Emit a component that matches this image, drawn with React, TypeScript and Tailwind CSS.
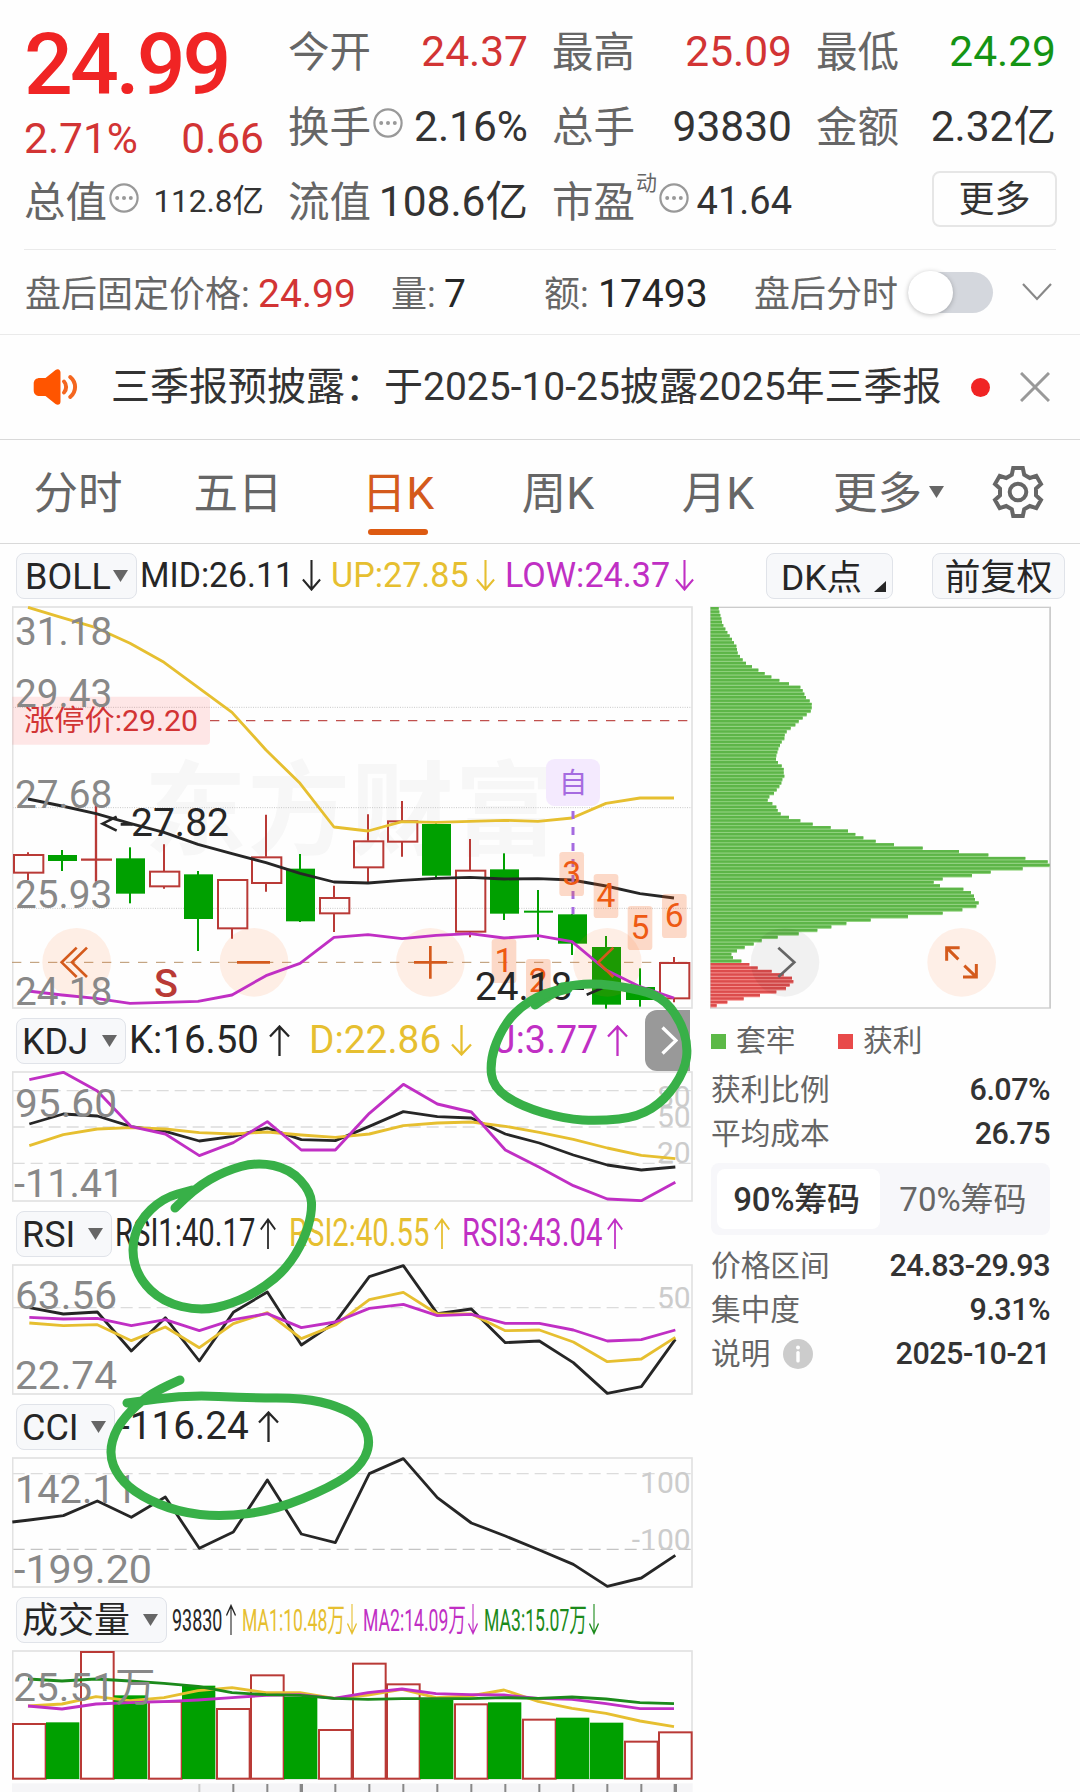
import type { FC, ReactNode } from 'react'

// Charts are drawn in thirds of a pixel, one candle every 102 units
const STEP = 102
const FONT = "font-['Roboto','Noto_Sans_CJK_SC',sans-serif]"

const YELLOW = '#e6bf30'
const PURPLE = '#c02fc4'
const BLACK = '#262626'
const GREEN = '#1b8a1b'
const RED = '#b93a36'
const ORANGE = '#d45a1c'

type Candle = { up: boolean; high: number; low: number; top: number; bottom: number }

const c = (up: boolean, high: number, low: number, top: number, bottom: number): Candle => ({
  up,
  high,
  low,
  top,
  bottom,
})

const candles: Candle[] = [
  c(true, 787, 870, 793, 848),
  c(false, 780, 843, 795, 813),
  c(true, 640, 875, 809, 809),
  c(false, 772, 940, 805, 911),
  c(true, 763, 896, 843, 889),
  c(false, 843, 1083, 853, 987),
  c(true, 867, 1046, 868, 1015),
  c(true, 674, 905, 800, 879),
  c(false, 792, 996, 836, 994),
  c(true, 887, 1026, 922, 970),
  c(true, 673, 876, 752, 832),
  c(true, 633, 800, 692, 755),
  c(false, 700, 862, 702, 857),
  c(true, 747, 1042, 840, 1025),
  c(false, 790, 990, 838, 971),
  c(false, 900, 1050, 962, 968),
  c(false, 972, 1095, 973, 1061),
  c(false, 1038, 1256, 1071, 1244),
  c(false, 1135, 1250, 1191, 1230),
  c(true, 1101, 1237, 1117, 1225),
]

const boll = {
  up: [52, 83, 113, 160, 217, 292, 367, 480, 580, 711, 723, 695, 697, 694, 691, 694, 684, 640, 624, 624],
  mid: [627, 648, 671, 700, 727, 763, 791, 818, 850, 876, 879, 871, 865, 862, 867, 866, 870, 888, 911, 924],
  low: [1203, 1215, 1225, 1240, 1237, 1234, 1215, 1157, 1120, 1042, 1034, 1046, 1036, 1031, 1044, 1037, 1055, 1140, 1190, 1224],
}

const kdj = {
  k: [342, 312, 318, 350, 364, 393, 379, 354, 389, 392, 349, 305, 320, 324, 372, 399, 435, 465, 480, 471],
  d: [407, 374, 357, 353, 357, 368, 372, 366, 375, 382, 372, 347, 339, 336, 349, 367, 388, 414, 436, 446],
  j: [209, 187, 243, 350, 372, 437, 398, 335, 420, 420, 310, 223, 282, 306, 420, 472, 527, 567, 572, 517],
}

const rsi = {
  r1: [893, 912, 906, 1023, 923, 1053, 907, 846, 1005, 937, 800, 767, 911, 897, 998, 993, 1058, 1150, 1130, 988],
  r2: [939, 947, 944, 992, 951, 1013, 941, 908, 986, 945, 869, 847, 912, 912, 962, 960, 996, 1055, 1047, 982],
  r3: [922, 927, 925, 947, 929, 962, 929, 911, 953, 936, 895, 883, 917, 913, 940, 940, 960, 993, 989, 960],
}

const cci = [360, 347, 303, 352, 291, 445, 396, 240, 402, 428, 221, 176, 293, 369, 408, 450, 493, 559, 534, 466]

const volume = {
  tops: [972, 967, 756, 886, 905, 857, 927, 826, 890, 990, 791, 853, 895, 913, 907, 959, 953, 968, 1025, 997],
  down: [1, 3, 5, 8, 12, 14, 16, 17],
  ma1: [918, 912, 890, 902, 893, 872, 863, 878, 878, 895, 885, 868, 893, 888, 870, 904, 925, 940, 963, 980],
  ma2: [918, 927, 912, 908, 905, 900, 893, 886, 884, 895, 878, 867, 881, 884, 885, 895, 898, 911, 926, 926],
  ma3: [837, 843, 837, 843, 850, 859, 878, 884, 886, 895, 898, 896, 896, 896, 893, 895, 891, 897, 908, 911],
}

const chips = [
  24, 26, 29, 32, 34, 38, 44, 50, 57, 64, 70, 77, 79, 81, 88, 96, 106, 124, 143, 162, 182, 206, 235, 269, 276, 281,
  286, 297, 303, 303, 300, 288, 276, 264, 254, 240, 228, 222, 221, 213, 208, 203, 200, 197, 196, 202, 213, 219, 219,
  221, 215, 212, 206, 198, 190, 176, 171, 185, 197, 201, 210, 235, 269, 306, 360, 412, 434, 458, 495, 550, 636, 745,
  833, 944, 1011, 1017, 936, 840, 784, 696, 669, 688, 758, 781, 790, 793, 804, 797, 755, 696, 592, 480, 407, 362,
  320, 264, 201, 153, 129, 102, 79, 62, 67, 92, 116, 141, 183, 219, 244, 248, 237, 226, 197, 148, 99, 50, 18,
]
const PROFIT_FROM = chips.length - 13

const Line: FC<{ values: number[]; color: string; x0?: number; lead?: string }> = ({ values, color, x0 = 88, lead = '' }) => (
  <polyline
    points={lead + values.map((v, i) => `${x0 + i * STEP},${v}`).join(' ')}
    fill="none"
    stroke={color}
    strokeWidth="8.500"
    strokeLinejoin="round"
  />
)

const Dash: FC<{ y: number; color?: string }> = ({ y, color = '#dcdcdc' }) => (
  <line x1="38" x2="2076" y1={y} y2={y} stroke={color} strokeWidth="4" strokeDasharray="36 18" />
)

const Scale: FC<{ x?: number; y: number; children: string; width: number }> = ({ x = 45, y, children, width }) => (
  <text x={x} y={y} fontSize="119" fill="#888" textLength={width} lengthAdjust="spacingAndGlyphs">
    {children}
  </text>
)

const Level: FC<{ y: number; children: string }> = ({ y, children }) => (
  <text x="2072" y={y} fontSize="90" fill="#ccc" textAnchor="end">
    {children}
  </text>
)

const Plot: FC<{ top: number; height?: number; children: ReactNode }> = ({ top, height = 393, children }) => (
  <svg
    className="block shrink-0"
    width="682"
    height={height / 3}
    viewBox={`36 ${top} 2046 ${height}`}
  >
    {children}
  </svg>
)

const Frame: FC<{ y: number; height: number }> = ({ y, height }) => (
  <rect x="38" y={y} width="2038" height={height} fill="none" stroke="#e2e2e2" strokeWidth="5" />
)

const More: FC = () => (
  <svg width="30" height="30" viewBox="0 0 30 30" className="shrink-0">
    <circle cx="15" cy="15" r="13.6" fill="none" stroke="#999" strokeWidth="2.200" />
    <circle cx="8.2" cy="15" r="2" fill="#999" />
    <circle cx="15" cy="15" r="2" fill="#999" />
    <circle cx="21.8" cy="15" r="2" fill="#999" />
  </svg>
)

const Stat: FC<{ label: string; value: string; icon?: boolean; tone?: string; sup?: string }> = ({
  label,
  value,
  icon,
  sup,
  tone = 'text-[42.5px] text-[#333]',
}) => (
  <div className="flex h-[75px] items-center whitespace-nowrap">
    <span className="pt-[3px] text-[41.5px] text-[#666]">{label}</span>
    {sup && <span className="-mt-9 ml-px self-center text-[21px] leading-none text-[#666]">{sup}</span>}
    {icon && (
      <span className="-mt-2 ml-0.5">
        <More />
      </span>
    )}
    <span className={`ml-auto ${tone}`}>{value}</span>
  </div>
)

const Caret: FC<{ className?: string }> = ({ className = '' }) => (
  <svg width="15" height="12" viewBox="0 0 15 12" className={`shrink-0 ${className}`}>
    <path d="M0 0h15L7.5 12z" fill="#666" />
  </svg>
)

const Picker: FC<{ label: string; className: string }> = ({ label, className }) => (
  <div
    className={`flex h-[46px] shrink-0 items-center justify-between rounded-lg border border-[#e0e3e9] bg-[#f7f8fa] pr-[8px] text-[36px] text-[#262626] ${className}`}
  >
    <span className="pt-0.5">{label}</span>
    <Caret />
  </div>
)

const Arrow: FC<{ up?: boolean; width: number }> = ({ up, width }) => (
  <svg
    width={width}
    height="31"
    viewBox="0 0 21 31"
    preserveAspectRatio="none"
    className={`shrink-0 ${up ? '' : 'rotate-180'}`}
    fill="none"
    stroke="currentColor"
    strokeWidth="2.300"
  >
    <path d="M10.5 31V1.5M1 11.5l9.5-10 9.5 10" />
  </svg>
)

// Values that run out of room are squeezed sideways instead of shrunk
const Reading: FC<{ text: string; box: string; squeeze?: string; color: string; up?: boolean; arrow?: number }> = ({
  text,
  box,
  squeeze = '',
  color,
  up,
  arrow = 21,
}) => (
  <span className={`flex shrink-0 items-center ${color}`}>
    <span className={`whitespace-nowrap ${box}`}>
      <span className={`inline-block origin-left ${squeeze}`}>{text}</span>
    </span>
    <Arrow up={up} width={arrow} />
  </span>
)

const Tab: FC<{ label: string; active?: boolean }> = ({ label, active }) => (
  <div
    className={`relative flex w-40 items-center justify-center pt-[5px] text-[44.5px] ${active ? 'text-[#d45a1c]' : 'text-[#666]'}`}
  >
    {label}
    {active && <span className="absolute bottom-2 h-1.5 w-[60px] rounded-full bg-[#dd5a11]" />}
  </div>
)

const Header: FC = () => (
  <section className="mx-6 grid h-[250px] shrink-0 grid-cols-4 gap-x-6 border-b border-[#eaeaea] pt-3.5">
    <div>
      <div className="h-[100px] text-[86px] leading-[101px] font-medium tracking-[-3px] text-[#f02424]">24.99</div>
      <div className="flex h-[50px] items-center justify-between text-[42.5px] text-[#d23434]">
        <span>2.71%</span>
        <span>0.66</span>
      </div>
      <Stat label="总值" value="112.8亿" icon tone="text-[31.5px] text-[#333]" />
    </div>
    <div>
      <Stat label="今开" value="24.37" tone="text-[42.5px] text-[#d23434]" />
      <Stat label="换手" value="2.16%" icon />
      <Stat label="流值" value="108.6亿" />
    </div>
    <div>
      <Stat label="最高" value="25.09" tone="text-[42.5px] text-[#d23434]" />
      <Stat label="总手" value="93830" />
      <Stat label="市盈" value="41.64" sup="动" icon tone="text-[38px] text-[#333]" />
    </div>
    <div>
      <Stat label="最低" value="24.29" tone="text-[42.5px] text-[#149414]" />
      <Stat label="金额" value="2.32亿" />
      <div className="flex h-[70px] items-center justify-end">
        <button className="-mr-px h-14 w-[125px] rounded-lg border-2 border-[#e6e6e6] pt-0.5 text-[36px] leading-none text-[#333]">
          更多
        </button>
      </div>
    </div>
  </section>
)

const AfterHours: FC = () => (
  <section className="flex h-[85px] shrink-0 items-center border-b border-[#eaeaea] pl-[25px] text-[36px] whitespace-nowrap text-[#666]">
    <div className="flex items-center pt-[5px]">
      <span className="w-[233px]">盘后固定价格:</span>
      <span className="w-[133px] text-[39px] text-[#d23434]">24.99</span>
      <span className="w-[53px]">量:</span>
      <span className="w-[100px] text-[39px] text-[#262626]">7</span>
      <span className="w-[54px]">额:</span>
      <span className="w-[156px] text-[39px] text-[#262626]">17493</span>
      <span className="w-[154px]">盘后分时</span>
    </div>
    <span className="flex h-[41px] w-[85px] items-center rounded-full bg-[#d4d7dd]">
      <span className="h-[43px] w-[45px] rounded-full bg-white shadow-[0_1px_5px_rgba(0,0,0,0.25)]" />
    </span>
    <svg width="30" height="18" viewBox="0 0 30 18" className="ml-[29px]" fill="none" stroke="#888" strokeWidth="2.2">
      <path d="M1 1l14 15L29 1" />
    </svg>
  </section>
)

const Notice: FC = () => (
  <section className="flex h-[105px] shrink-0 items-center border-b border-[#d9d9d9] pl-[33px] whitespace-nowrap">
    <svg width="46" height="36" viewBox="0 0 46 36" className="mr-[32px]">
      <path
        d="M7 9h5.500L22.500 1c2.500-1.800 5-.5 5 2.500v29c0 3-2.500 4.300-5 2.500L12.500 27H7c-4 0-6.300-2-6.300-6v-6c0-4 2.300-6 6.300-6z"
        fill="#ff5500"
      />
      <path d="M31 12.500c2.800 3 2.800 8 0 11M37.200 8c6.500 5.500 6.500 14.500 0 20" fill="none" stroke="#f4661f" strokeWidth="4" strokeLinecap="round" />
    </svg>
    <span className="w-[860px] pt-px text-[39px] text-[#333]">三季报预披露：于2025-10-25披露2025年三季报</span>
    <span className="h-[19px] w-[19px] rounded-full bg-[#f02424]" />
    <svg width="30" height="30" viewBox="0 0 30 30" className="ml-[30px]" stroke="#999" strokeWidth="3">
      <path d="M1 1l28 28M29 1L1 29" />
    </svg>
  </section>
)

const Tabs: FC = () => (
  <nav className="flex h-[104px] shrink-0 border-b border-[#d9d9d9]">
    <div className="-ml-0.5 flex">
      <Tab label="分时" />
      <Tab label="五日" />
      <Tab label="日K" active />
      <Tab label="周K" />
      <Tab label="月K" />
    </div>
    <div className="ml-[35px] flex items-center text-[44.5px] text-[#666]">
      <span className="pt-[5px]">更多</span>
      <Caret className="ml-[7px]" />
    </div>
    <svg width="52" height="52" viewBox="-26 -26 52 52" className="ml-12 self-center" fill="none" stroke="#666" strokeWidth="4">
      <path d="M-4.800-24H4.800L6.200-17.300L11.800-14L18.300-16.200L23-8L18-3.400V3.400L23 8L18.300 16.200L11.800 14L6.200 17.300L4.800 24H-4.800L-6.200 17.300L-11.800 14L-18.300 16.200L-23 8L-18 3.400V-3.400L-23-8L-18.300-16.200L-11.800-14L-6.200-17.300z" />
      <circle r="8.300" />
    </svg>
  </nav>
)

const BollRow: FC = () => (
  <div className="flex h-[62px] shrink-0 items-center pt-px pl-4 text-[34.5px]">
    <Picker label="BOLL" className="mr-[3px] w-[121px] pl-[8px]" />
    <Reading text="MID:26.11" box="w-[162px]" squeeze="scale-x-[0.98]" color="text-[#262626]" arrow={19} />
    <Reading text="UP:27.85" box="ml-[10px] w-[145px]" squeeze="scale-x-[0.99]" color="text-[#e6bf30]" arrow={19} />
    <Reading text="LOW:24.37" box="ml-[10px] w-[170px]" squeeze="scale-x-[0.99]" color="text-[#c02fc4]" arrow={19} />
    <div className="relative ml-[72px] h-[46px] w-[127px] rounded-lg border border-[#e0e3e9] bg-[#f7f8fa] pt-px pl-[14px] text-[35.5px] leading-[46px] text-[#262626]">
      DK点
      <svg width="12" height="11" className="absolute right-1.5 bottom-1.5">
        <path d="M12 0v11H0z" fill="#262626" />
      </svg>
    </div>
    <div className="ml-[39px] h-[46px] w-[133px] rounded-lg border border-[#e0e3e9] bg-[#f7f8fa] pt-px text-center text-[36px] leading-[46px] text-[#262626]">
      前复权
    </div>
  </div>
)

const badges = [
  [1475, 1047],
  [1578, 1107],
  [1678, 786],
  [1781, 852],
  [1883, 948],
  [1986, 912],
]

const KChart: FC = () => (
  <Plot top={48} height={1209}>
    <text x="432" y="770" fontSize="308" fontWeight="700" fill="#f7f7f7" textLength="1240">
      东方财富
    </text>
    {[352, 653, 955].map((y) => (
      <line key={y} x1="38" x2="2076" y1={y} y2={y} stroke="#c8c8c8" strokeWidth="3" strokeDasharray="3 4" />
    ))}
    <Frame y={51} height={1203} />
    <path d="M37 320H618q12 0 12 12V452q0 12-12 12H37z" fill="#ff2020" fillOpacity="0.11" />
    <text x="72" y="423" fontSize="87" fill="#d23434" textLength="522" lengthAdjust="spacingAndGlyphs">
      涨停价:29.20
    </text>
    <line x1="630" x2="2070" y1="392" y2="392" stroke="#c0504d" strokeWidth="4" strokeDasharray="28 26" />
    <line x1="36" x2="2076" y1="1117" y2="1117" stroke="#b8936a" strokeWidth="3" strokeDasharray="28 26" />

    {candles.map(({ up, high, low, top, bottom }, i) => {
      const x = 84 + i * STEP
      if (up && top === bottom) {
        return <path key={i} d={`M${x} ${high}V${low}M${x - 45} ${top}H${x + 48}`} stroke={RED} strokeWidth="7" />
      }
      if (up) {
        return (
          <g key={i} fill="none" stroke={RED} strokeWidth="6">
            <path d={`M${x} ${high}V${top}M${x} ${bottom}V${low}`} />
            <rect x={x - 42} y={top + 2} width="88" height={bottom - top - 2} />
          </g>
        )
      }
      return (
        <g key={i} fill="#00a000">
          <rect x={x - 3} y={high} width="6" height={low - high} />
          <rect x={x - 42} y={top} width="87" height={bottom - top} />
        </g>
      )
    })}

    {[230, 762, 1291, 1822].map((x) => (
      <circle key={x} cx={x} cy="1117" r="103" fill="#ff6a1a" fillOpacity="0.11" />
    ))}

    <Line values={boll.up} color={YELLOW} x0={84} />
    <Line values={boll.mid} color={BLACK} x0={84} />
    <Line values={boll.low} color={PURPLE} x0={84} />

    <line x1="1719" x2="1719" y1="663" y2="973" stroke="#a56be0" strokeWidth="9" strokeDasharray="24 24" />
    <rect x="1638" y="507" width="162" height="141" rx="26" fill="#f4eafe" />
    <text x="1719" y="608" fontSize="86" fill="#a56be0" textAnchor="middle">
      自
    </text>
    {badges.map(([x, y], i) => (
      <g key={i}>
        <rect x={x} y={y} width="74" height="132" rx="10" fill="#f8651c" fillOpacity="0.24" />
        <text x={x + 37} y={y + 98} fontSize="101" fill="#ee5a13" textAnchor="middle">
          {i + 1}
        </text>
      </g>
    ))}

    <g fill="none" stroke={ORANGE} strokeWidth="8">
      <path d="M230 1073L185 1117L230 1161M261 1073L216 1117L261 1161" />
      <path d="M711 1117H810M1242 1117H1341M1291 1068V1166" />
      <path d="M1840 1073L1795 1117L1840 1161" />
    </g>
    <Scale y={165} width={292}>31.18</Scale>
    <Scale y={350} width={292}>29.43</Scale>
    <Scale y={654} width={292}>27.68</Scale>
    <Scale y={953} width={292}>25.93</Scale>
    <Scale y={1244} width={292}>24.18</Scale>
    <text x="462" y="1220" fontSize="119" fontWeight="500" fill={RED}>
      S
    </text>
    <g fontSize="115" fill={BLACK}>
      <path d="M350 680L308 701L350 722M362 703H398" fill="none" stroke={BLACK} strokeWidth="8" />
      <text x="393" y="738" textLength="294" lengthAdjust="spacingAndGlyphs">
        27.82
      </text>
      <text x="1425" y="1230" textLength="292" lengthAdjust="spacingAndGlyphs">
        24.18
      </text>
      <path d="M1722 1196H1752M1760 1178L1802 1196L1760 1214" fill="none" stroke={BLACK} strokeWidth="8" />
    </g>
  </Plot>
)

const ChipChart: FC = () => (
  <svg className="block" width="342" height="403" viewBox="60 48 1026 1209">
    <rect x="62" y="52" width="1019" height="1202" fill="none" stroke="#ccc" strokeWidth="4" />
    <rect x="1078" y="52" width="5" height="1202" fill="#ccc" />
    {chips.map((w, i) => {
      const y = 51 + i * 10.27
      const profit = i >= PROFIT_FROM
      return (
        <g key={i}>
          <rect x="62" y={y} width={w} height="10.27" fill={profit ? '#f58c8a' : '#8fd27c'} />
          <rect x="62" y={y} width={w} height="7.300" fill={profit ? '#dc4c4c' : '#5db548'} />
        </g>
      )
    })}
    <circle cx="285" cy="1117" r="103" fill="#000" fillOpacity="0.05" />
    <path d="M265 1073L313 1117L265 1161" fill="none" stroke="#666" strokeWidth="8" />
    <circle cx="815" cy="1117" r="103" fill="#ff6a1a" fillOpacity="0.1" />
    <path d="M770 1112V1073H809M772 1075L805 1108M859 1122V1161H819M857 1159L823 1127" fill="none" stroke={ORANGE} strokeWidth="9" />
  </svg>
)

const Row: FC<{ label: ReactNode; value: string }> = ({ label, value }) => (
  <div className="flex h-11 items-center justify-between pt-0.5">
    <span className="flex items-center text-[29.7px] text-[#666]">{label}</span>
    <span className="text-[30.5px] font-medium tracking-[-0.5px] text-[#333]">{value}</span>
  </div>
)

const ChipPanel: FC = () => (
  <aside className="ml-4 w-[342px] shrink-0">
    <ChipChart />
    <div className="w-[341px] pr-px pl-px">
      <div className="flex h-[62px] items-center pt-0.5 text-[29.7px] text-[#666]">
        <span className="mr-2.5 h-[15px] w-[15px] bg-[#5cb947]" />
        <span className="w-[102px]">套牢</span>
        <span className="mr-2.5 h-[15px] w-[15px] bg-[#e84a4a]" />
        获利
      </div>
      <div className="-mt-1">
        <Row label="获利比例" value="6.07%" />
        <Row label="平均成本" value="26.75" />
      </div>
      <div className="mt-2 mb-[8px] flex h-[72px] items-center rounded-lg bg-[#f7f7fa] p-1.5 text-[33px]">
        <span className="flex h-[60px] w-[163px] items-center justify-center rounded-lg bg-white pr-1 pt-0.5 font-medium tracking-[-0.3px] text-[#333]">
          90%筹码
        </span>
        <span className="flex-1 pt-0.5 pl-0.5 text-center text-[#666]">70%筹码</span>
      </div>
      <Row label="价格区间" value="24.83-29.93" />
      <Row label="集中度" value="9.31%" />
      <Row
        label={
          <>
            说明
            <svg width="30" height="30" viewBox="0 0 30 30" className="ml-[13px]">
              <circle cx="15" cy="15" r="15" fill="#ccc" />
              <circle cx="15" cy="8.500" r="2" fill="#fff" />
              <rect x="13.300" y="12" width="3.400" height="11.500" rx="1.500" fill="#fff" />
            </svg>
          </>
        }
        value="2025-10-21"
      />
    </div>
  </aside>
)

const LabelRow: FC<{ children: ReactNode; size?: string }> = ({ children, size = 'text-[38px]' }) => (
  <div className={`flex h-[62px] shrink-0 items-center pt-px pl-1 ${size}`}>{children}</div>
)

const KdjPanel: FC = () => (
  <>
    <LabelRow>
      <Picker label="KDJ" className="mr-[3px] w-[110px] pl-[5px]" />
      <Reading text="K:16.50" box="w-[140px]" squeeze="scale-x-[1.01]" color="text-[#262626]" up />
      <Reading text="D:22.86" box="ml-[19px] w-[142px]" squeeze="scale-x-[1.02]" color="text-[#e6bf30]" />
      <Reading text="J:3.77" box="ml-[23px] w-[112px]" squeeze="scale-x-[0.99]" color="text-[#c02fc4]" up />
      <span className="mr-1 ml-auto flex h-[61px] w-[45px] items-center justify-end rounded-l-xl bg-[#999] pr-3">
        <svg width="17" height="29" viewBox="0 0 17 29" fill="none" stroke="#fff" strokeWidth="3.300">
          <path d="M1.500 1.500L15 14.500L1.500 27.500" />
        </svg>
      </span>
    </LabelRow>
    <Plot top={183}>
      <Dash y={242} />
      <Dash y={351} />
      <Dash y={460} />
      <Frame y={186} height={387} />
      <Level y={290}>80</Level>
      <Level y={352}>50</Level>
      <Level y={459}>20</Level>
      <Line values={kdj.k} color={BLACK} />
      <Line values={kdj.d} color={YELLOW} />
      <Line values={kdj.j} color={PURPLE} />
      <Scale y={320} width={306}>95.60</Scale>
      <Scale y={560} x={42} width={331}>-11.41</Scale>
    </Plot>
  </>
)

const RsiPanel: FC = () => (
  <>
    <LabelRow>
      <Picker label="RSI" className="mr-[3px] w-[96px] pl-[5px]" />
      <Reading text="RSI1:40.17" box="w-[145px]" squeeze="scale-x-[0.77]" color="text-[#262626]" up arrow={16} />
      <Reading text="RSI2:40.55" box="ml-[13px] w-[145px]" squeeze="scale-x-[0.77]" color="text-[#e6bf30]" up arrow={16} />
      <Reading text="RSI3:43.04" box="ml-[12px] w-[145px]" squeeze="scale-x-[0.77]" color="text-[#c02fc4]" up arrow={16} />
    </LabelRow>
    <Plot top={762}>
      <Dash y={893} />
      <Frame y={765} height={387} />
      <Level y={893}>50</Level>
      <Line values={rsi.r1} color={BLACK} />
      <Line values={rsi.r2} color={YELLOW} />
      <Line values={rsi.r3} color={PURPLE} />
      <Scale y={898} width={306}>63.56</Scale>
      <Scale y={1138} width={306}>22.74</Scale>
    </Plot>
  </>
)

const CciPanel: FC = () => (
  <>
    <LabelRow>
      <Picker label="CCI" className="mr-1 w-[99px] pl-[5px]" />
      <Reading text="-116.24" box="w-[139px]" squeeze="scale-x-[1.02]" color="text-[#262626]" up />
    </LabelRow>
    <Plot top={171}>
      <Dash y={221} />
      <Dash y={448} color="#c4c4c4" />
      <Frame y={174} height={387} />
      <Level y={278}>100</Level>
      <Level y={450}>-100</Level>
      <Line values={cci} color={BLACK} lead="37,366 " />
      <Scale y={308} width={366}>142.11</Scale>
      <Scale y={548} x={42} width={414}>-199.20</Scale>
    </Plot>
  </>
)

const VolumePanel: FC = () => (
  <>
    <LabelRow size="text-[32px]">
      <Picker label="成交量" className="mr-[5px] w-[151px] pl-[5px]" />
      <Reading text="93830" box="w-[54px]" squeeze="scale-x-[0.56]" color="text-[#262626]" up arrow={10} />
      <Reading text="MA1:10.48万" box="ml-[6px] w-[105px]" squeeze="scale-x-[0.55]" color="text-[#e6bf30]" arrow={10} />
      <Reading text="MA2:14.09万" box="ml-[6px] w-[105px]" squeeze="scale-x-[0.55]" color="text-[#c02fc4]" arrow={10} />
      <Reading text="MA3:15.07万" box="ml-[6px] w-[105px]" squeeze="scale-x-[0.55]" color="text-[#1b8a1b]" arrow={10} />
    </LabelRow>
    <Plot top={750} height={426}>
      <Frame y={753} height={384} />
      {volume.tops.map((top, i) =>
        volume.down.includes(i) ? (
          <rect key={i} x={36 + i * STEP} y={top} width="100" height={1137 - top} fill="#00a000" />
        ) : (
          <rect key={i} x={39 + i * STEP} y={top} width="98" height={1136 - top} fill="#fff" stroke={RED} strokeWidth="6" />
        ),
      )}
      <Line values={volume.ma1} color={YELLOW} x0={84} />
      <Line values={volume.ma2} color={PURPLE} x0={84} />
      <Line values={volume.ma3} color={GREEN} x0={84} />
      <Scale y={903} x={40} width={426}>25.51万</Scale>
      <rect x="36" y="1150" width="2042" height="26" fill="#f5f5f7" />
      {candles.slice(5).map((_, i) => (
        <rect
          key={i}
          x={(i === 3 || i === 14 ? 593 : 595) + i * STEP}
          y="1152"
          width={i === 3 || i === 14 ? 10 : 6}
          height="24"
          fill={i === 0 ? '#ccc' : '#888'}
        />
      ))}
    </Plot>
  </>
)

const strokes = [
  [[535, 1005], [552, 993], [568, 989]],
  [[568, 988], [545, 992], [516, 1010], [499, 1034], [490, 1062], [493, 1087], [520, 1106], [565, 1119], [600, 1121], [638, 1117], [665, 1100], [685, 1070], [688, 1045], [680, 1020], [662, 997], [632, 988], [592, 983], [562, 987]],
  [[175, 1208], [195, 1188], [225, 1171], [257, 1162], [290, 1169], [311, 1192], [312, 1213], [304, 1240], [287, 1268], [262, 1289], [232, 1304], [200, 1311], [163, 1302], [139, 1279], [131, 1250], [139, 1221], [163, 1198], [192, 1190]],
  [[180, 1380], [157, 1390], [136, 1405], [116, 1428], [109, 1454], [118, 1477], [140, 1496], [178, 1512], [222, 1517], [275, 1510], [331, 1487], [359, 1468], [371, 1445], [363, 1420], [338, 1406], [303, 1398], [250, 1398], [187, 1395], [127, 1403]],
]

// Runs quadratic curves through the midpoints
const smooth = (pts: number[][]) => {
  let d = `M${pts[0][0]} ${pts[0][1]}`
  for (let i = 1; i < pts.length - 1; i++) {
    const [x, y] = pts[i]
    const [nx, ny] = pts[i + 1]
    d += `Q${x} ${y} ${(x + nx) / 2} ${(y + ny) / 2}`
  }
  const last = pts[pts.length - 1]
  return `${d}L${last[0]} ${last[1]}`
}

const Marker: FC = () => (
  <svg
    className="pointer-events-none absolute top-0 left-0"
    width="1080"
    height="1792"
    fill="none"
    stroke="#38b048"
    strokeWidth="9"
    strokeLinecap="round"
    strokeLinejoin="round"
  >
    {strokes.map((s, i) => (
      <path key={i} d={smooth(s)} />
    ))}
  </svg>
)

export default function App() {
  return (
    <main className={`relative flex h-[1792px] w-[1080px] flex-col overflow-hidden bg-[#fefefe] ${FONT}`}>
      <Header />
      <AfterHours />
      <Notice />
      <Tabs />
      <BollRow />
      <div className="flex items-start pl-3">
        <div className="flex w-[682px] shrink-0 flex-col">
          <KChart />
          <KdjPanel />
          <RsiPanel />
          <CciPanel />
          <VolumePanel />
        </div>
        <ChipPanel />
      </div>
      <Marker />
    </main>
  )
}
